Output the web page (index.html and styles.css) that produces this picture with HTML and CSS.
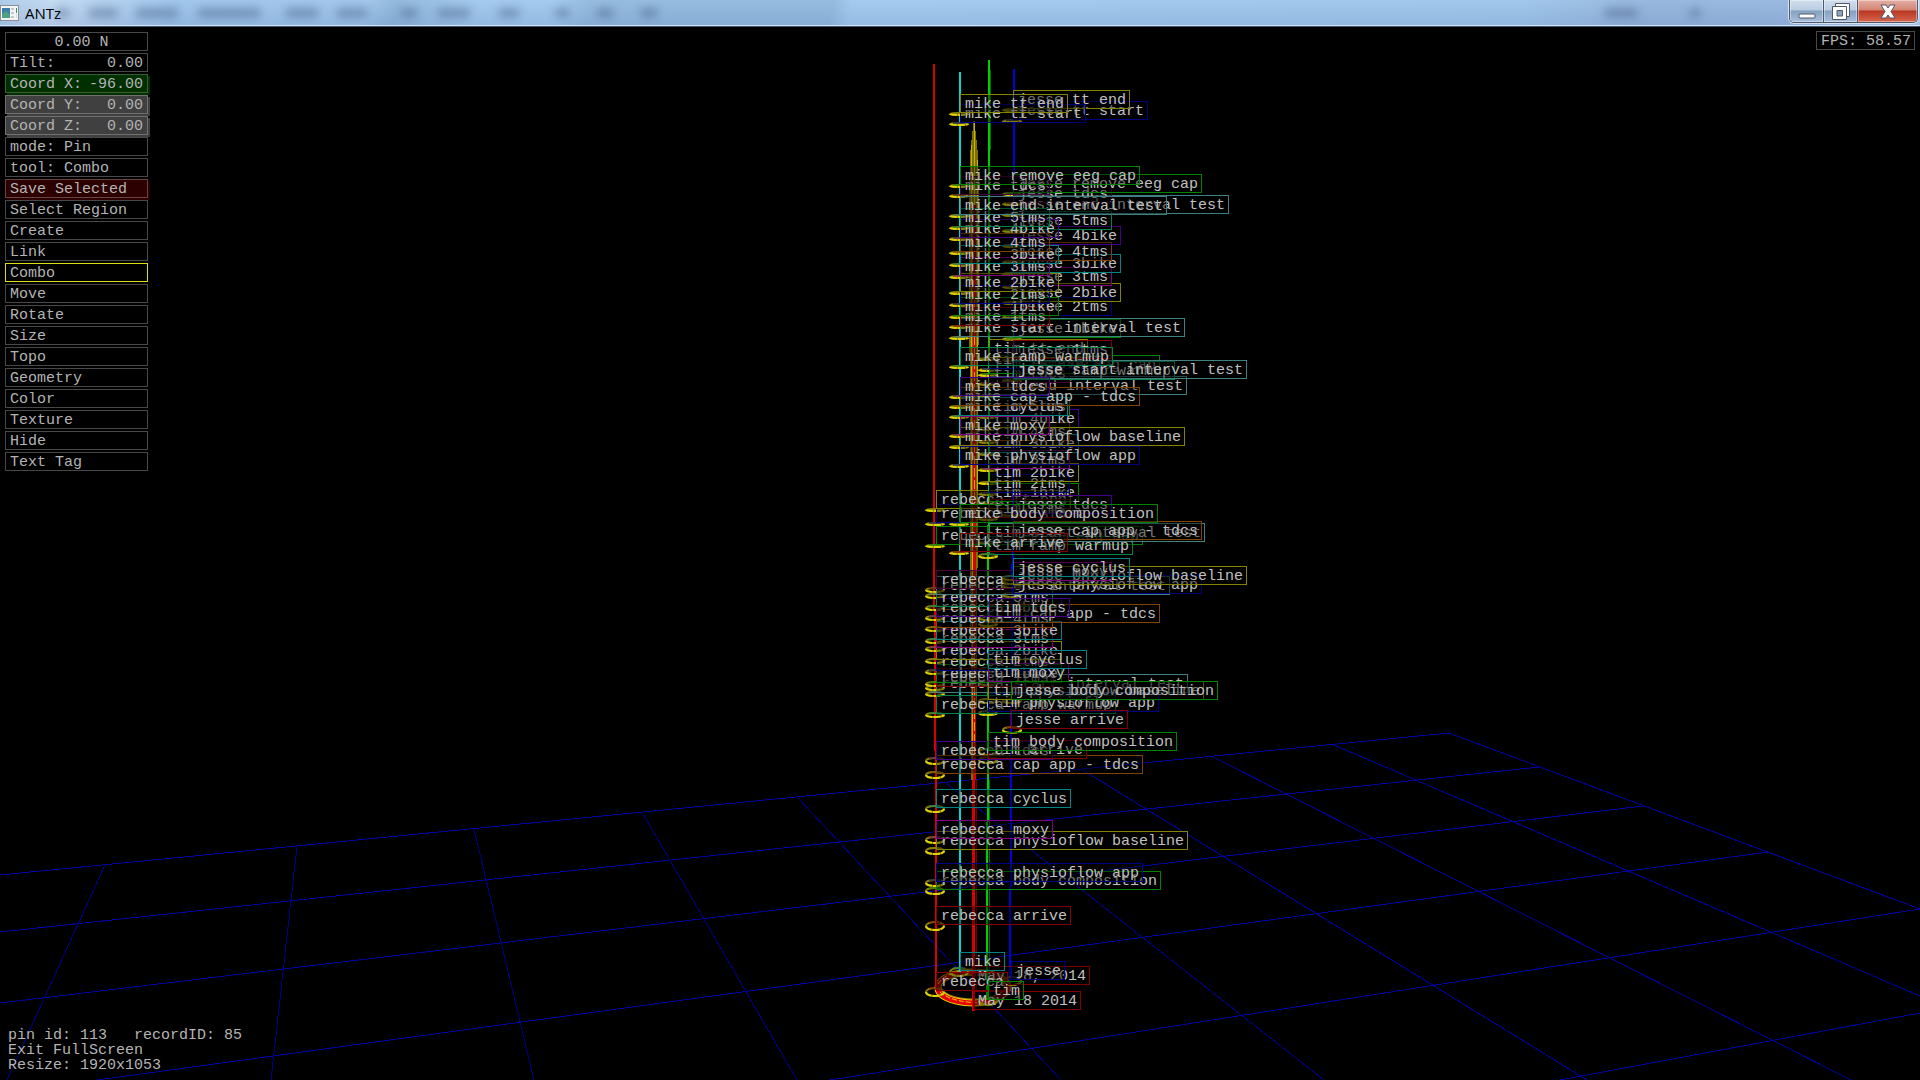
FILE: index.html
```html
<!DOCTYPE html>
<html lang="en">
<head>
    <meta charset="UTF-8">
    <meta name="viewport" content="width=device-width, initial-scale=1.0">
    <title>ANTz</title>
    <link rel="stylesheet" href="styles.css">
</head>
<body>
    <header class="title-bar">
        <div class="glass" aria-hidden="true">
            <i style="left: 56px; width: 14px"></i>
            <i style="left: 88px; width: 30px"></i>
            <i style="left: 135px; width: 44px"></i>
            <i style="left: 197px; width: 64px"></i>
            <i style="left: 285px; width: 34px"></i>
            <i style="left: 336px; width: 32px"></i>
            <i style="left: 400px; width: 18px"></i>
            <i style="left: 437px; width: 34px"></i>
            <i style="left: 498px; width: 22px"></i>
            <i style="left: 554px; width: 16px"></i>
            <i style="left: 596px; width: 18px"></i>
            <i style="left: 640px; width: 18px"></i>
            <i style="left: 1604px; width: 34px"></i>
            <i style="left: 1689px; width: 12px"></i>
        </div>
        <svg class="app-icon" width="19" height="16" viewBox="0 0 19 16" aria-hidden="true">
            <rect x="0.5" y="0.5" width="18" height="15" fill="#f4f4f4" stroke="#8a8f96"/>
            <rect x="2" y="3" width="8" height="10" fill="#3d7fa8"/>
            <path d="M2 13V9l4-3 4 4v3z" fill="#4fa383"/>
            <path d="M11 3h3v2h-3zM11 7h3v2h-3zM11 11h3v2h-3z" fill="#c3c7cb"/>
            <path d="M16 3h1v5h-1z" fill="#2f9a5c"/>
            <path d="M16 9h1v4h-1z" fill="#d5d8db"/>
        </svg>
        <h1>ANTz</h1>
        <div class="window-buttons">
            <button class="minimize" aria-label="Minimize">
                <svg width="18" height="6" viewBox="0 0 18 6"><rect x="1" y="1" width="16" height="4" rx="1" fill="#fff" stroke="#53586b"/></svg>
            </button>
            <button class="restore" aria-label="Restore">
                <svg width="18" height="17" viewBox="0 0 18 17">
                    <path d="M3.500.500h14v13h-14z" fill="#fff" stroke="#53586b"/>
                    <path d="M.500 3.500h14v13h-14z" fill="#fff" stroke="#53586b"/>
                    <path d="M5 7.500h5.500v5.500H5z" fill="#8ba3c0" stroke="#53586b"/>
                </svg>
            </button>
            <button class="close" aria-label="Close">
                <svg width="16" height="15" viewBox="0 0 16 15"><path d="M1 1h5l2 3 2-3h5l-4 6.500 4 6.500h-5l-2-3-2 3H1l4-6.500z" fill="#fff" stroke="#53586b"/></svg>
            </button>
        </div>
    </header>

    <main class="stage">
        <svg class="scene" width="1" height="1" aria-hidden="true">
            <g transform="translate(-960 -27)">
                <g class="grid" shape-rendering="crispEdges">
                    <path class="rows" d="M0 875L1449 733M0 932L1539 767M0 1003L1643 806M97 1080L1768 852M830 1080L1920 909M1560 1080L1920 1013"/>
                    <path class="cols" d="M105 865L7 1080M297 846L271 1080M474 829L534 1080M642 812L797 1080M798 798L1061 1080M946 783L1324 1080"/>
                    <path class="rows" d="M1081 769L1587 1080M1211 756L1851 1080M1334 745L1920 996M1449 733L1920 909"/>
                </g>

                <!-- base ring -->
                <g fill="none">
                    <ellipse cx="973" cy="987" rx="35" ry="15" stroke="#a89600" stroke-width="7"/>
                    <ellipse cx="973" cy="987" rx="35" ry="15" stroke="#a00000" stroke-width="5"/>
                    <path d="M938 988A35 15 0 0 0 990 1001" stroke="#e6d200" stroke-width="7"/>
                    <path d="M938 988A35 15 0 0 0 990 1001" stroke="#e80000" stroke-width="5"/>
                    <path d="M940 992Q952 1003 985 1003M938 984Q944 974 962 971" stroke="#e6d200" stroke-dasharray="5 2"/>
                </g>

                <!-- time lines -->
                <g fill="none" shape-rendering="crispEdges">
                    <path d="M974 116L978 155 979 200 978 500 976 780H971L970 500 969 200 970 155z" fill="#7c6e00"/>
                    <path d="M974 122V205M971 145V500M977 160V520M972 500V760" stroke="#c4b400"/>
                    <path d="M974 205V290" stroke="#800000" stroke-width="3"/>
                    <path d="M974 280V780M973 780V1011" stroke="#d80000" stroke-width="3"/>
                    <path d="M974 300V500M974 650V770" stroke="#e0a000" stroke-dasharray="9 3"/>
                    <path d="M976 780V990" stroke="#6e0000"/>
                    <path d="M934 64V540L936 820V990" stroke="#d80000" stroke-width="2"/>
                    <path d="M960 72V972" stroke="#00d8d8" stroke-width="2"/>
                    <path d="M989 60V400L988 660 987 1000" stroke="#00d000" stroke-width="2"/>
                    <path d="M990 70V150M989 780V990" stroke="#007000"/>
                    <path d="M1014 69V400L1012 620 1010 980" stroke="#0000d8" stroke-width="2"/>
                </g>
                <g id="nodes" fill="none"></g>
            </g>
        </svg>
        <div class="tags" id="tags"></div>

        <nav class="menu">
            <div class="item heading">0.00 N</div>
            <div class="item"><span>Tilt:</span><span>0.00</span></div>
            <div class="item green"><span>Coord X:</span><span>-96.00</span></div>
            <div class="item gray"><span>Coord Y:</span><span>0.00</span></div>
            <div class="item gray"><span>Coord Z:</span><span>0.00</span></div>
            <button class="item">mode: Pin</button>
            <button class="item">tool: Combo</button>
            <button class="item red">Save Selected</button>
            <button class="item">Select Region</button>
            <button class="item">Create</button>
            <button class="item">Link</button>
            <button class="item active">Combo</button>
            <button class="item">Move</button>
            <button class="item">Rotate</button>
            <button class="item">Size</button>
            <button class="item">Topo</button>
            <button class="item">Geometry</button>
            <button class="item">Color</button>
            <button class="item">Texture</button>
            <button class="item">Hide</button>
            <button class="item">Text Tag</button>
        </nav>

        <div class="fps">FPS: 58.57</div>

        <div class="status">
            <p>pin id: 113   recordID: 85</p>
            <p>Exit FullScreen</p>
            <p>Resize: 1920x1053</p>
        </div>
    </main>

    <script src="script.js"></script>
</body>
</html>
```
FILE: styles.css
```css
* {
    box-sizing: border-box;
}

body {
    display: flex;
    flex-direction: column;
    height: 100vh;
    margin: 0;
    overflow: hidden;
    background-color: black;
    color: #b4b4b4;
    font-family: "Liberation Mono", monospace;
    font-size: 15px;
    line-height: 20px;
}

button {
    margin: 0;
    padding: 0;
    font: inherit;
    color: inherit;
    background: none;
    border: none;
    border-radius: 0;
    cursor: pointer;
}

/* title bar */
.title-bar {
    position: relative;
    display: flex;
    align-items: flex-start;
    flex: none;
    height: 27px;
    padding-right: 2px;
    border-bottom: 1px solid #46566e;
    box-shadow: inset 0 -1px #d3e3f5;
    background: linear-gradient(rgba(255, 255, 255, 0.06), rgba(70, 90, 150, 0.12)),
        linear-gradient(100deg, #a9c8e8 0, #c0d8f0 50px, #9cc3ea 170px, #9dc4ea 360px, #8db5da 390px, #9fc7ed 470px, #9fc7ed 550px, #90b8dd 580px, #90b8dd 820px, #a0c8ee 840px, #9cc4ea 1500px, #93b4dc 1620px, #94b5dd 1760px, #b3cfee 100%);
}

.glass {
    position: absolute;
    inset: 0 0 2px;
    overflow: hidden;
}

.glass i {
    position: absolute;
    top: 8px;
    height: 10px;
    border-radius: 5px;
    background-color: rgba(60, 85, 125, 0.4);
    filter: blur(4px);
}

.app-icon {
    position: relative;
    margin-top: 5px;
}

.title-bar h1 {
    position: relative;
    flex: 1;
    margin: 0 0 0 6px;
    color: black;
    font-family: "Open Sans", sans-serif;
    font-size: 15px;
    font-weight: normal;
    line-height: 26px;
}

.window-buttons {
    position: relative;
    display: flex;
    height: 23px;
    border: 1px solid #4d5a70;
    border-top: none;
    border-radius: 0 0 5px 5px;
    box-shadow: 0 0 0 1px rgba(255, 255, 255, 0.6);
    overflow: hidden;
}

.window-buttons button {
    display: flex;
    align-items: center;
    justify-content: center;
    width: 34px;
    border-right: 1px solid #4d5a70;
    box-shadow: inset 0 0 0 1px rgba(255, 255, 255, 0.4);
    background: linear-gradient(#cfdeec, #b9cde2 45%, #86a0bf 50%, #a5bfdc);
}

.window-buttons .minimize {
    padding-top: 9px;
}

.window-buttons .close {
    width: 59px;
    border-right: none;
    background: linear-gradient(#e3b0a6, #d48473 45%, #b93722 50%, #d7664d);
}

/* 3d view */
.stage {
    position: relative;
    flex: 1;
    overflow: hidden;
}

.scene,
.tags {
    position: absolute;
    top: 0;
    left: 50%;
    overflow: visible;
}

.grid {
    fill: none;
}

.rows {
    stroke: #0000a0;
}

.cols {
    stroke: #000084;
}

.tag {
    position: absolute;
    height: 19px;
    padding: 0 3px 0 4px;
    border: 1px solid;
    background-color: rgba(0, 0, 0, 0.4);
    white-space: pre;
}

.tag span {
    color: #c0c0c0;
}

/* menu */
.menu {
    position: relative;
    display: flex;
    flex-direction: column;
    gap: 2px;
    width: 143px;
    margin: 5px;
}

.item {
    display: flex;
    justify-content: space-between;
    height: 19px;
    padding: 0 4px;
    border: 1px solid #484848;
    text-align: left;
}

.heading {
    justify-content: center;
    padding-left: 14px;
}

.green {
    background-color: #003000;
    border-color: #386038;
    box-shadow: 2px 2px #003000;
}

.gray {
    background-color: #404040;
    border-color: #707070;
    box-shadow: 2px 2px #404040;
}

.red {
    background-color: #2c0000;
    border-color: #6a4444;
    box-shadow: 2px 2px #2c0000;
}

.active {
    border-color: #dcdc10;
}

.fps {
    position: absolute;
    top: 4px;
    right: 5px;
    height: 19px;
    padding: 0 3px 0 4px;
    border: 1px solid #484848;
}

.status {
    position: absolute;
    bottom: 7px;
    left: 8px;
    line-height: 15px;
}

.status p {
    margin: 0;
    white-space: pre;
}
```
FILE: script.js
```js
const colors = {
    yellow: '#848400', blue: '#000084', green: '#008400', plum: '#4a0038',
    slate: '#408080', mint: '#008448', purple: '#42008a', orange: '#844200',
    teal: '#008484', magenta: '#840084', red: '#840000'
};

// event, tag color
const events = [
    ['arrive', 'red'], ['body composition', 'green'], ['physioflow app', 'blue'],
    ['physioflow baseline', 'yellow'], ['moxy', 'magenta'], ['cyclus', 'teal'],
    ['cap app - tdcs', 'orange'], ['tdcs', 'purple'], ['ramp warmup', 'mint'],
    ['start interval test', 'slate'], ['1tms', 'red'], ['1bike', 'green'],
    ['2tms', 'blue'], ['2bike', 'yellow'], ['3tms', 'magenta'], ['3bike', 'teal'],
    ['4tms', 'orange'], ['4bike', 'purple'], ['5tms', 'mint'],
    ['end interval test', 'slate'], ['tdcs', 'plum'], ['remove eeg cap', 'green'],
    ['tt start', 'blue'], ['tt end', 'yellow']
];

// tag height of every event, in the order above; far riders first
const riders = [
    { name: 'rebecca', color: 'red', x: [936, 936], node: 935, base: 972,
      y: [906, 871, 863, 831, 820, 789, 755, 741, 695, 674, 668, 664, 652, 641, 629, 621, 609, 598, 588, 576, 570, 526, 504, 490] },
    { name: 'tim', color: 'green', x: [988, 989], node: 988, base: 981,
      y: [740, 732, 693, 681, 663, 650, 604, 598, 536, 523, 499, 483, 474, 463, 450, 434, 422, 409, 397, 376, 364, 355, 350, 339] },
    { name: 'jesse', color: 'blue', x: [1011, 1013], node: 1012, base: 961,
      y: [710, 681, 575, 566, 562, 558, 521, 495, 361, 360, 340, 319, 297, 283, 267, 254, 242, 226, 211, 195, 184, 174, 101, 90] },
    { name: 'mike', color: 'teal', x: [960, 960], node: 959, base: 952,
      y: [533, 504, 446, 427, 416, 397, 387, 377, 347, 318, 307, 297, 285, 273, 257, 245, 233, 219, 208, 196, 176, 166, 104, 94] }
];

const tags = document.getElementById('tags');
let nodes = '';

function addTag(text, color, x, y) {
    const tag = document.createElement('div');
    const label = document.createElement('span');
    tag.className = 'tag';
    tag.style.left = (x - 960) + 'px';
    tag.style.top = (y - 27) + 'px';
    tag.style.borderColor = colors[color];
    label.textContent = text;
    tag.appendChild(label);
    tags.appendChild(tag);
}

// rings get rounder toward the bottom of the view
function addNode(color, x, y) {
    const ry = Math.max(1, Math.round((y - 300) / 170));
    nodes += `<ellipse cx="${x}" cy="${y}" rx="9" ry="${ry}" stroke="#8c8000" stroke-width="2"/>`;
    nodes += `<path d="M${x - 9} ${y}A9 ${ry} 0 0 0 ${x + 9} ${y}" stroke="#e0d400" stroke-width="2" stroke-dasharray="7 1"/>`;
    nodes += `<path d="M${x - 6} ${y - ry}H${x + 6}" stroke="${colors[color]}"/>`;
}

addTag('May 18, 2014', 'red', 973, 966);
addTag('May 18 2014', 'red', 973, 991);

for (const rider of riders) {
    addTag(rider.name, rider.color, rider.x[0], rider.base);
    addNode(rider.color, rider.node, rider.base + 20);
    events.forEach(([event, color], i) => {
        const x = rider.y[i] > 640 ? rider.x[0] : rider.x[1];
        addTag(rider.name + ' ' + event, color, x, rider.y[i]);
        addNode(color, rider.node, rider.y[i] + 20);
    });
}

document.getElementById('nodes').innerHTML = nodes;
```
